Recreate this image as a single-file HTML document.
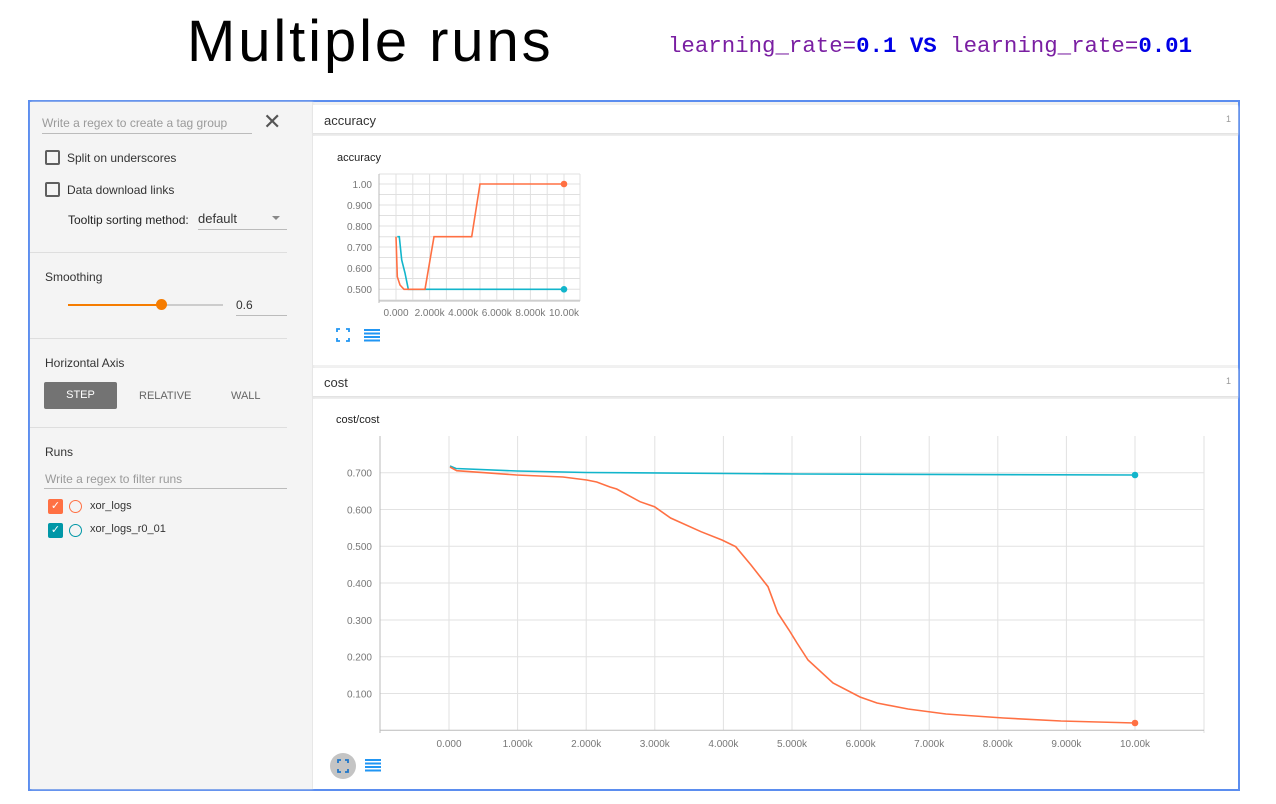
<!DOCTYPE html>
<html><head><meta charset="utf-8"><style>
*{box-sizing:border-box;margin:0;padding:0}
body{width:1276px;height:804px;background:#fff;position:relative;overflow:hidden;font-family:"Liberation Sans",Arial,sans-serif;color:#212121}
.a{position:absolute;white-space:nowrap}
.s{font-size:12px;color:#333}
.cb{position:absolute;width:15px;height:15px;border:2px solid #5f5f5f;border-radius:2px}
.hr{position:absolute;left:30px;width:257px;height:1px;background:#dedede}
</style></head><body>
<div class="a" style="left:187px;top:2px;font-size:58px;letter-spacing:2.9px;color:#000;line-height:80px">Multiple runs</div>
<div class="a" style="left:668px;top:32px;font-family:'Liberation Mono',monospace;font-size:22.4px;color:#7a1fa2;line-height:28px">learning_rate=<b style="color:#0000e6">0.1</b> <b style="color:#0000e6">VS</b> learning_rate=<b style="color:#0000e6">0.01</b></div>

<div class="a" style="left:28px;top:100px;width:1212px;height:691px;border:2px solid #5b8def;background:#f1f1f1"></div>
<div class="a" style="left:30px;top:102px;width:282px;height:687px;background:#f4f4f4;box-shadow:1px 0 2px #e2e2e2"></div>

<div class="a" style="left:42px;top:116px;font-size:12px;color:#9a9a9a">Write a regex to create a tag group</div>
<div class="a" style="left:42px;top:133px;width:210px;height:1px;background:#bbb"></div>
<div class="a" style="left:263px;top:109px;font-size:22px;color:#555">✕</div>
<div class="cb" style="left:45px;top:150px"></div><div class="a s" style="left:67px;top:151px">Split on underscores</div>
<div class="cb" style="left:45px;top:182px"></div><div class="a s" style="left:67px;top:183px">Data download links</div>
<div class="a s" style="left:68px;top:213px;color:#222">Tooltip sorting method:</div>
<div class="a" style="left:198px;top:211px;font-size:13px;color:#333">default</div>
<div class="a" style="left:272px;top:216px;width:0;height:0;border-left:4px solid transparent;border-right:4px solid transparent;border-top:4px solid #888"></div>
<div class="a" style="left:198px;top:229px;width:89px;height:1px;background:#bbb"></div>
<div class="hr" style="top:252px"></div>
<div class="a s" style="left:45px;top:270px">Smoothing</div>
<div class="a" style="left:68px;top:304px;width:93px;height:2px;background:#f57c00"></div>
<div class="a" style="left:161px;top:304px;width:62px;height:2px;background:#ccc"></div>
<div class="a" style="left:156px;top:299px;width:11px;height:11px;border-radius:50%;background:#f57c00"></div>
<div class="a s" style="left:236px;top:298px">0.6</div>
<div class="a" style="left:236px;top:315px;width:51px;height:1px;background:#bbb"></div>
<div class="hr" style="top:338px"></div>
<div class="a s" style="left:45px;top:356px">Horizontal Axis</div>
<div class="a" style="left:44px;top:382px;width:73px;height:27px;background:#737373;border-radius:2px;color:#fff;font-size:11px;text-align:center;line-height:27px">STEP</div>
<div class="a" style="left:139px;top:390px;font-size:11px;color:#666">RELATIVE</div>
<div class="a" style="left:231px;top:390px;font-size:11px;color:#666">WALL</div>
<div class="hr" style="top:427px"></div>
<div class="a s" style="left:45px;top:445px">Runs</div>
<div class="a" style="left:45px;top:472px;font-size:12px;color:#9a9a9a">Write a regex to filter runs</div>
<div class="a" style="left:44px;top:488px;width:243px;height:1px;background:#bbb"></div>
<div class="a" style="left:48px;top:499px;width:15px;height:15px;background:#ff7043;border-radius:2px;color:#fff;font-size:11px;text-align:center;line-height:15px">✓</div>
<div class="a" style="left:69px;top:500px;width:13px;height:13px;border-radius:50%;border:1.5px solid #ff7043"></div>
<div class="a" style="left:90px;top:500px;font-size:11px;color:#333">xor_logs</div>
<div class="a" style="left:48px;top:523px;width:15px;height:15px;background:#0097a7;border-radius:2px;color:#fff;font-size:11px;text-align:center;line-height:15px">✓</div>
<div class="a" style="left:69px;top:524px;width:13px;height:13px;border-radius:50%;border:1.5px solid #0097a7"></div>
<div class="a" style="left:90px;top:523px;font-size:11px;color:#333">xor_logs_r0_01</div>

<div class="a" style="left:313px;top:105px;width:925px;height:29px;background:#fff;border-bottom:1px solid #e3e3e3;box-shadow:0 1px 2px #e6e6e6"></div>
<div class="a" style="left:324px;top:113px;font-size:13px;color:#333">accuracy</div>
<div class="a" style="left:1226px;top:114px;font-size:9px;color:#999">1</div>
<div class="a" style="left:313px;top:136px;width:925px;height:229px;background:#fff"></div>
<div class="a" style="left:337px;top:152px;font-size:11px;color:#222">accuracy</div>
<svg class="a" style="left:0;top:0" width="1276" height="804">
<g stroke="#e0e0e0" stroke-width="1">
<path d="M379 174H580M379 184H580M379 194.5H580M379 205H580M379 215.5H580M379 226H580M379 236.7H580M379 247H580M379 257.5H580M379 268H580M379 278.5H580M379 289.3H580M379 300H580"/>
<path d="M396 174V301M412.8 174V301M429.6 174V301M446.4 174V301M463.2 174V301M480 174V301M496.8 174V301M513.6 174V301M530.4 174V301M547.2 174V301M564 174V301M580 174V301"/>
</g>
<path d="M379 174V303M379 301H580" stroke="#bbb" fill="none"/>
<g font-size="10" fill="#777" text-anchor="end" font-family="Liberation Sans">
<text x="372" y="188">1.00</text><text x="372" y="209">0.900</text><text x="372" y="230">0.800</text><text x="372" y="251">0.700</text><text x="372" y="272">0.600</text><text x="372" y="293">0.500</text>
</g>
<g font-size="10" fill="#777" text-anchor="middle" font-family="Liberation Sans">
<text x="396" y="316">0.000</text><text x="429.6" y="316">2.000k</text><text x="463.2" y="316">4.000k</text><text x="496.8" y="316">6.000k</text><text x="530.4" y="316">8.000k</text><text x="564" y="316">10.00k</text>
</g>
<path d="M397.3 236.7L399.3 236.7L401.7 260L405 273L408.3 289.3H564" stroke="#12b5cb" stroke-width="1.6" fill="none"/>
<path d="M396 236.7L397.3 276.7L400 285L404 289.3H425L434 236.7H471.7L480 184H564" stroke="#ff7043" stroke-width="1.6" fill="none"/>
<circle cx="564" cy="184" r="3.3" fill="#ff7043"/><circle cx="564" cy="289.3" r="3.3" fill="#12b5cb"/>
<path d="M337 332v-3h3M346 329h3v3M349 338v3h-3M340 341h-3v-3" stroke="#2196f3" stroke-width="1.8" fill="none"/>
<path d="M364 330h16M364 333.5h16M364 337h16M364 340.5h16" stroke="#2196f3" stroke-width="2"/>
</svg>

<div class="a" style="left:313px;top:368px;width:925px;height:29px;background:#fff;border-bottom:1px solid #e3e3e3;box-shadow:0 1px 2px #e6e6e6"></div>
<div class="a" style="left:324px;top:375px;font-size:13px;color:#333">cost</div>
<div class="a" style="left:1226px;top:376px;font-size:9px;color:#999">1</div>
<div class="a" style="left:313px;top:399px;width:925px;height:390px;background:#fff"></div>
<div class="a" style="left:336px;top:414px;font-size:11px;color:#222">cost/cost</div>
<svg class="a" style="left:0;top:0" width="1276" height="804">
<g stroke="#e2e2e2" stroke-width="1">
<path d="M380 472.7H1204M380 509.5H1204M380 546.3H1204M380 583H1204M380 620H1204M380 656.7H1204M380 693.5H1204"/>
<path d="M449 436V730M517.6 436V730M586.2 436V730M654.8 436V730M723.4 436V730M792 436V730M860.6 436V730M929.2 436V730M997.8 436V730M1066.4 436V730M1135 436V730M1204 436V733"/>
</g>
<path d="M380 436V733M380 730.3H1204" stroke="#bbb" fill="none"/>
<g font-size="10" fill="#777" text-anchor="end" font-family="Liberation Sans">
<text x="372" y="476.5">0.700</text><text x="372" y="513.3">0.600</text><text x="372" y="550">0.500</text><text x="372" y="587">0.400</text><text x="372" y="624">0.300</text><text x="372" y="660.5">0.200</text><text x="372" y="697.3">0.100</text>
</g>
<g font-size="10" fill="#777" text-anchor="middle" font-family="Liberation Sans">
<text x="449" y="747">0.000</text><text x="517.6" y="747">1.000k</text><text x="586.2" y="747">2.000k</text><text x="654.8" y="747">3.000k</text><text x="723.4" y="747">4.000k</text><text x="792" y="747">5.000k</text><text x="860.6" y="747">6.000k</text><text x="929.2" y="747">7.000k</text><text x="997.8" y="747">8.000k</text><text x="1066.4" y="747">9.000k</text><text x="1135" y="747">10.00k</text>
</g>
<path d="M450 466L456 468.5L517 471L586 472.5L800 474L1135 475" stroke="#12b5cb" stroke-width="1.6" fill="none"/>
<path d="M450 467L456.7 470.7L516.7 475L563 477L586.7 480L596.7 482L610 487L616.7 489L640 501.7L654.5 506.7L670.6 518L701 531.7L722 540L735.7 546.7L751 565L768 586.7L777.8 613L789 630L797 643L808 660L833 683L860 697L877 703L908 709L946 714L1003.6 718L1061 721L1135 723" stroke="#ff7043" stroke-width="1.6" fill="none"/>
<circle cx="1135" cy="723" r="3.3" fill="#ff7043"/><circle cx="1135" cy="475" r="3.3" fill="#12b5cb"/>
<circle cx="343" cy="766" r="13" fill="#c4c4c4"/>
<path d="M338 763v-3h3M345 760h3v3M348 769v3h-3M341 772h-3v-3" stroke="#2077c9" stroke-width="1.8" fill="none"/>
<path d="M365 760h16M365 763.5h16M365 767h16M365 770.5h16" stroke="#2196f3" stroke-width="2"/>
</svg>
</body></html>
